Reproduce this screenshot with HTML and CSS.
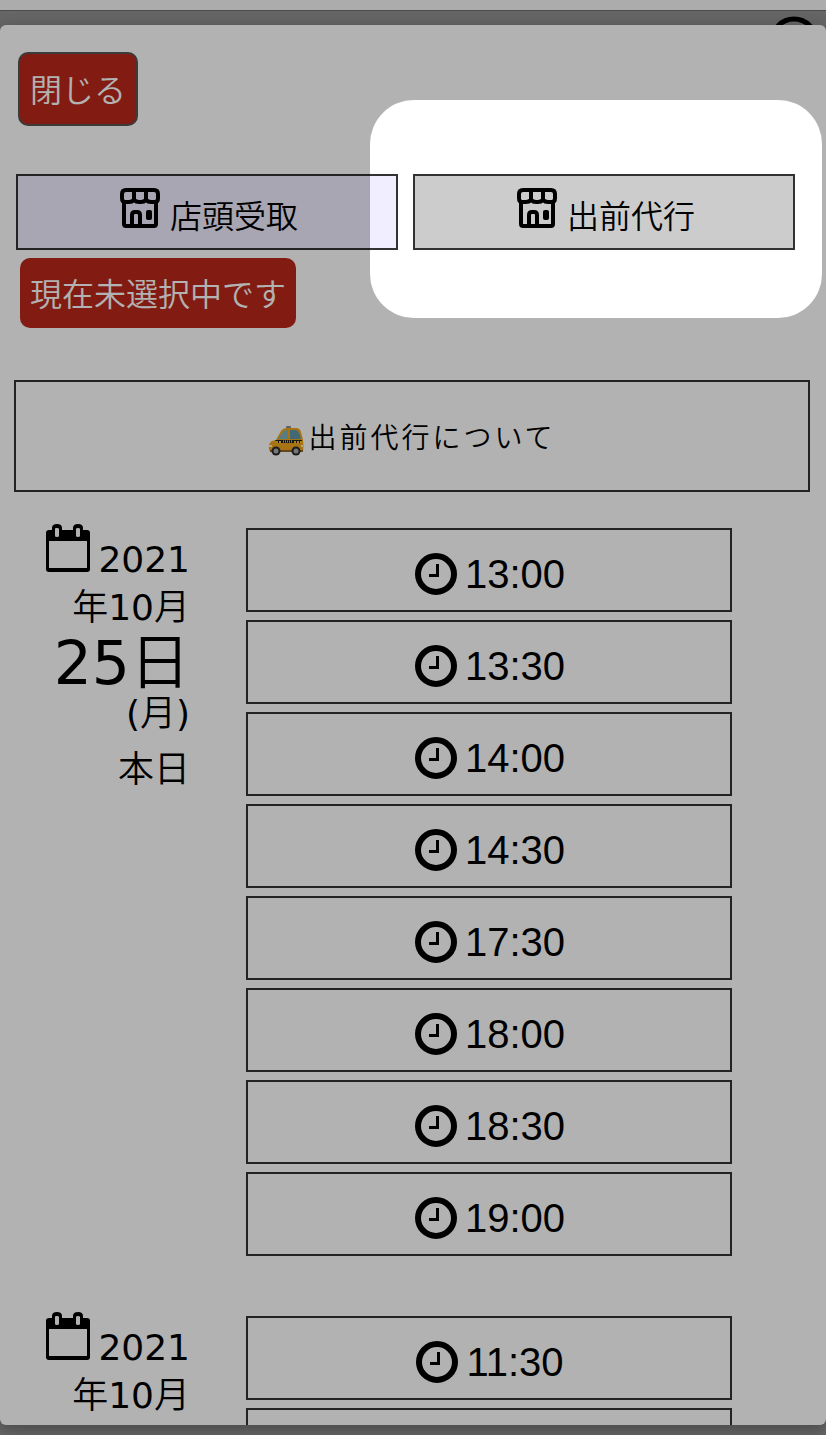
FILE: index.html
```html
<!DOCTYPE html>
<html lang="ja">
<head>
<meta charset="utf-8">
<meta name="viewport" content="width=device-width, initial-scale=1">
<title>受取日時の選択</title>
<link rel="stylesheet" href="styles.css">
</head>
<body>
<svg class="sprite" aria-hidden="true">
  <symbol id="store" viewBox="0 0 40 40">
    <g fill="none" stroke="currentColor" stroke-width="4">
      <path d="M6 2H34Q38 2 38 6V10Q38 14 35 14H31Q28 14 26 12Q24 14 21 14H19Q16 14 14 12Q12 14 9 14H5Q2 14 2 10V6Q2 2 6 2Z"/>
      <path d="M4 13V36Q4 38 6 38H34Q36 38 36 36V13"/>
      <path d="M14 2V13M26 2V13"/>
      <path d="M12 38V27Q12 24 15 24H17Q20 24 20 27V38"/>
    </g>
    <rect x="26" y="22" width="6" height="10" rx="2"/>
  </symbol>
  <symbol id="calendar" viewBox="0 -1 46 50">
    <path fill-rule="evenodd" d="M4 7H7V5Q7 1 12 1Q17 1 17 5V7H28V5Q28 1 33 1Q38 1 38 5V7H42Q45 7 45 10V46Q45 49 42 49H4Q1 49 1 46V10Q1 7 4 7ZM4 18V45H42V18ZM11 5Q10 5 10 6V13Q10 14 12 14Q14 14 14 13V6Q14 5 12 5ZM33 5Q31 5 31 6V13Q31 14 33 14Q35 14 35 13V6Q35 5 33 5Z"/>
  </symbol>
  <symbol id="clock" viewBox="0 0 42 42">
    <circle cx="21" cy="21" r="18" fill="none" stroke="currentColor" stroke-width="6"/>
    <path d="M22.500 11V22.500H14" fill="none" stroke="currentColor" stroke-width="3"/>
  </symbol>
</svg>

<div class="browser-bar"></div>
<div class="backdrop">
  <svg class="menu-ring" viewBox="0 0 50 50" aria-hidden="true"><circle cx="25" cy="25" r="22" fill="none" stroke="#000" stroke-width="5"/></svg>
  <main class="modal">
    <button class="close" type="button">閉じる</button>
    <div class="methods">
      <button class="method method-pickup" type="button"><svg class="store-icon" aria-hidden="true"><use href="#store"/></svg><span>店頭受取</span></button>
      <button class="method method-delivery" type="button"><svg class="store-icon" aria-hidden="true"><use href="#store"/></svg><span>出前代行</span></button>
    </div>
    <p class="status">現在未選択中です</p>
    <button class="about" type="button">
      <svg class="taxi" viewBox="0 0 36 30" aria-hidden="true">
        <rect x="18" y="0" width="5" height="4" rx="1" fill="#8b9094"/>
        <path d="M8 14L13 5Q15 2 20 2H28Q32 2 33 6L35 14Q36 20 35 26H3L1 24Q0 17 4 15Z" fill="#f0a51c"/>
        <path d="M10 13L15 6Q16 4 20 4V13Z" fill="#7fb3bf"/>
        <path d="M22 4H28Q30 4 31 7L33 13H22Z" fill="#5f95a5"/>
        <path d="M7 14H34V17H9Z" fill="#24221e"/>
        <path d="M8 16H13M26 16H34" stroke="#f4bd31" stroke-width="2" stroke-dasharray="2 1"/>
        <path d="M15 15.500H24" stroke="#e5bd4d" stroke-width="2" stroke-dasharray="1 1"/>
        <path d="M1 19H4V21H1ZM33 19H35V21H33Z" fill="#fff1b0"/>
        <path d="M2 24H35V26H2Z" fill="#8f652c"/>
        <circle cx="8" cy="25" r="4.500" fill="#29292b"/><circle cx="8" cy="25" r="2.500" fill="#aaa"/>
        <circle cx="28" cy="25" r="4.500" fill="#29292b"/><circle cx="28" cy="25" r="2.500" fill="#aaa"/>
      </svg><span>出前代行について</span>
    </button>
    <section class="day">
      <h2 class="date">
        <span class="year"><svg class="calendar-icon" aria-hidden="true"><use href="#calendar"/></svg>2021</span>
        <span class="month"><span class="kanji">年</span>10<span class="kanji">月</span></span>
        <span class="number">25<span class="kanji">日</span></span>
        <span class="weekday">(<span class="kanji">月</span>)</span>
        <span class="today"><span class="kanji">本日</span></span>
      </h2>
      <div class="times">
        <button class="time" type="button"><svg class="clock-icon" aria-hidden="true"><use href="#clock"/></svg>13:00</button>
        <button class="time" type="button"><svg class="clock-icon" aria-hidden="true"><use href="#clock"/></svg>13:30</button>
        <button class="time" type="button"><svg class="clock-icon" aria-hidden="true"><use href="#clock"/></svg>14:00</button>
        <button class="time" type="button"><svg class="clock-icon" aria-hidden="true"><use href="#clock"/></svg>14:30</button>
        <button class="time" type="button"><svg class="clock-icon" aria-hidden="true"><use href="#clock"/></svg>17:30</button>
        <button class="time" type="button"><svg class="clock-icon" aria-hidden="true"><use href="#clock"/></svg>18:00</button>
        <button class="time" type="button"><svg class="clock-icon" aria-hidden="true"><use href="#clock"/></svg>18:30</button>
        <button class="time" type="button"><svg class="clock-icon" aria-hidden="true"><use href="#clock"/></svg>19:00</button>
      </div>
    </section>
    <section class="day">
      <h2 class="date">
        <span class="year"><svg class="calendar-icon" aria-hidden="true"><use href="#calendar"/></svg>2021</span>
        <span class="month"><span class="kanji">年</span>10<span class="kanji">月</span></span>
      </h2>
      <div class="times">
        <button class="time" type="button"><svg class="clock-icon" aria-hidden="true"><use href="#clock"/></svg>11:30</button>
        <button class="time" type="button" aria-label="次の時間"></button>
      </div>
    </section>
  </main>
</div>
<div class="spotlight"></div>
</body>
</html>
```

FILE: styles.css
```css
* { box-sizing: border-box; }

body {
  margin: 0;
  height: 100vh;
  display: flex;
  flex-direction: column;
  position: relative;
  overflow: hidden;
  background: #929292;
  color: #000;
  font-family: "Noto Sans CJK JP", sans-serif;
  font-weight: 350;
}

button {
  margin: 0;
  padding: 0;
  color: inherit;
  font: inherit;
  cursor: pointer;
}

.sprite {
  position: absolute;
  width: 0;
  height: 0;
}

.browser-bar {
  flex: none;
  height: 11px;
  background: #f7f7f7;
  border-bottom: 1px solid #6d6d6d;
}

.backdrop {
  flex: 1;
  min-height: 0;
  display: flex;
  position: relative;
  padding: 14px 0 10px;
}

.menu-ring {
  position: absolute;
  top: 5px;
  right: 7px;
  width: 50px;
  height: 50px;
}

.modal {
  flex: 1;
  position: relative;
  overflow: hidden;
  padding-top: 27px;
  border-radius: 6px;
  background: #fff;
  box-shadow: 0 4px 16px rgba(0, 0, 0, 0.3);
}

.close {
  display: block;
  margin-left: 18px;
  padding: 10px 10px 12px;
  border: 2px solid #555;
  border-radius: 10px;
  background: #ba271a;
  color: #fff;
  font-size: 32px;
  line-height: 48px;
}

.methods {
  display: grid;
  grid-template-columns: 1fr 1fr;
  gap: 15px;
  margin: 48px 31px 0 16px;
}

.method {
  display: flex;
  justify-content: center;
  align-items: baseline;
  gap: 10px;
  padding: 12px 0 10px 4px;
  border: 2px solid #333;
  font-size: 32px;
  line-height: 48px;
}

.method-pickup { background: #f0eeff; }
.method-delivery { background: #ccc; }

.store-icon {
  width: 40px;
  height: 40px;
}

.status {
  width: fit-content;
  margin: 8px 0 0 20px;
  padding: 10px 10px 12px;
  border-radius: 10px;
  background: #ba271a;
  color: #fff;
  font-size: 32px;
  line-height: 48px;
}

.about {
  display: flex;
  justify-content: center;
  align-items: center;
  gap: 4px;
  width: calc(100% - 30px);
  margin: 52px 16px 36px 14px;
  padding: 30px 0;
  border: 2px solid #333;
  background: #fff;
  font-size: 28px;
  line-height: 48px;
  letter-spacing: 3px;
}

.taxi {
  width: 36px;
  height: 30px;
  margin-top: 10px;
}

.day {
  display: grid;
  grid-template-columns: 190fr 486fr;
  column-gap: 56px;
  align-items: start;
  margin: 0 94px 60px 0;
}

.date {
  display: grid;
  justify-items: end;
  margin: -6px 0 0;
  font-family: "DejaVu Sans", sans-serif;
  font-size: 36px;
  font-weight: 400;
  line-height: 48px;
}

.kanji {
  font-family: "Noto Sans CJK JP", sans-serif;
  font-weight: 350;
  line-height: 0;
}

.year {
  display: flex;
  align-items: baseline;
  gap: 7px;
}

.calendar-icon {
  width: 46px;
  height: 50px;
}

.number {
  font-size: 60px;
  line-height: 62px;
}

.weekday { line-height: 40px; }
.today { line-height: 72px; }

.times {
  display: grid;
  gap: 8px;
}

.time {
  display: flex;
  justify-content: center;
  align-items: center;
  gap: 8px;
  height: 84px;
  padding: 8px 0 0 2px;
  border: 2px solid #333;
  background: #fff;
  font-family: "Liberation Sans", Arial, sans-serif;
  font-size: 40px;
  font-weight: 400;
}

.clock-icon {
  width: 42px;
  height: 42px;
}

/* Guided-tour highlight: everything outside it is dimmed. */
.spotlight {
  position: absolute;
  top: 100px;
  right: 4px;
  width: 452px;
  height: 218px;
  border-radius: 44px;
  box-shadow: 0 0 0 200vmax rgba(0, 0, 0, 0.3);
  pointer-events: none;
}
```
